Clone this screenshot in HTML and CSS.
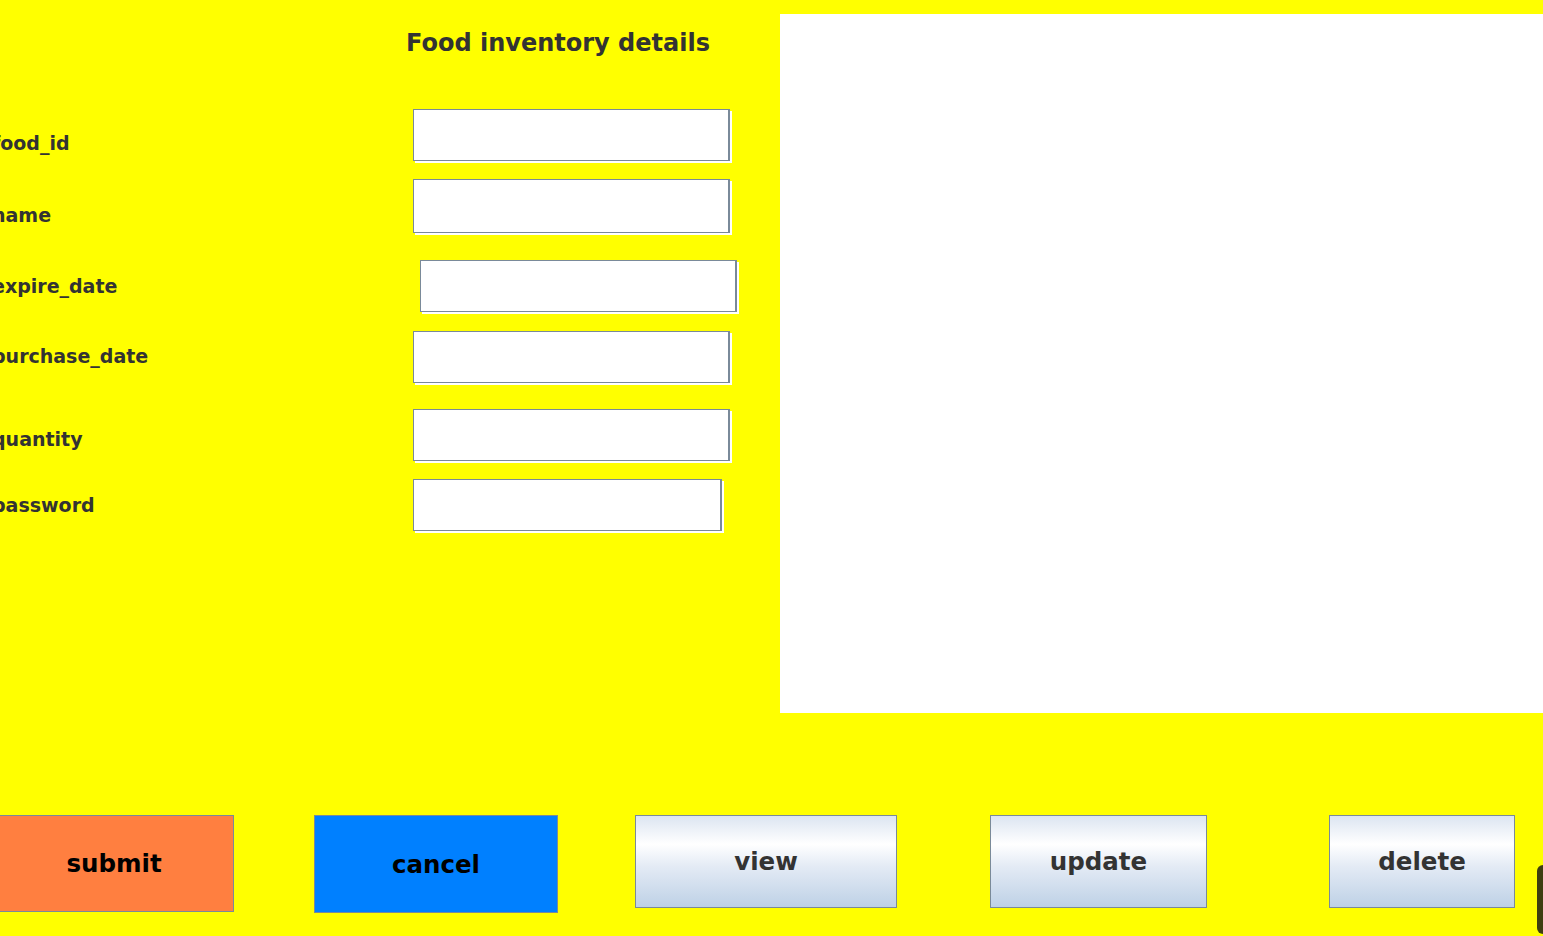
FILE: index.html
```html
<!DOCTYPE html>
<html lang="en">
<head>
<meta charset="utf-8">
<title>Food inventory details</title>
<link rel="stylesheet" href="styles.css">
</head>
<body>
<div class="app">
  <div class="top">
    <section class="form">
      <h1 class="title">Food inventory details</h1>
      <div class="row row-1"><label class="label">food_id</label><input class="field" type="text"></div>
      <div class="row row-2"><label class="label">name</label><input class="field field-tall" type="text"></div>
      <div class="row row-3"><label class="label">expire_date</label><input class="field field-shift" type="text"></div>
      <div class="row row-4"><label class="label">purchase_date</label><input class="field" type="text"></div>
      <div class="row row-5"><label class="label">quantity</label><input class="field" type="text"></div>
      <div class="row row-6"><label class="label">password</label><input class="field field-narrow" type="password"></div>
    </section>
    <div class="panel"></div>
  </div>
  <div class="buttons">
    <button class="btn btn-submit">submit</button>
    <button class="btn btn-cancel">cancel</button>
    <button class="btn btn-metal btn-view">view</button>
    <button class="btn btn-metal btn-update">update</button>
    <button class="btn btn-metal btn-delete">delete</button>
  </div>
  <div class="corner-tip"></div>
</div>
</body>
</html>
```
FILE: styles.css
```css
html, body {
  margin: 0;
  padding: 0;
}
body {
  background: #ffff00;
  width: 1543px;
  height: 936px;
  overflow: hidden;
  font-family: "DejaVu Sans", sans-serif;
  font-weight: bold;
  color: #333333;
}
.app {
  position: relative;
  width: 1543px;
  height: 936px;
}
.top {
  display: flex;
  padding-top: 14px;
}
.form {
  width: 780px;
  flex: none;
  display: flex;
  flex-direction: column;
}
.title {
  margin: 14px 0 0 406px;
  font-size: 24px;
  line-height: 30px;
  font-weight: bold;
  color: #333333;
  white-space: nowrap;
}
.panel {
  flex: 1;
  height: 699px;
  background: #ffffff;
}
.row {
  display: flex;
  align-items: flex-start;
}
.label {
  width: 421px;
  margin-left: -8px;
  flex: none;
  font-size: 19px;
  line-height: 20px;
  white-space: nowrap;
}
.field {
  box-sizing: border-box;
  width: 317px;
  height: 52px;
  margin: 0;
  padding: 0 4px;
  border: 1px solid #7a8a99;
  border-right-width: 2px;
  background: #ffffff;
  box-shadow: 2px 2px 0 #ffffff;
  outline: none;
  font: inherit;
}
.field-tall { height: 54px; }
.field-shift { margin-left: 7px; }
.field-narrow { width: 309px; }

.row-1 { margin-top: 51px; }
.row-1 .label { padding-top: 24px; }
.row-2 { margin-top: 18px; }
.row-2 .label { padding-top: 26px; }
.row-3 { margin-top: 27px; }
.row-3 .label { padding-top: 16px; }
.row-4 { margin-top: 19px; }
.row-4 .label { padding-top: 15px; }
.row-5 { margin-top: 26px; }
.row-5 .label { padding-top: 20px; }
.row-6 { margin-top: 18px; }
.row-6 .label { padding-top: 16px; }

.buttons {
  display: flex;
  align-items: flex-start;
  margin-top: 102px;
}
.btn {
  box-sizing: border-box;
  flex: none;
  margin: 0;
  padding: 0;
  border: 1px solid #7a8a99;
  font-family: inherit;
  font-weight: bold;
  font-size: 24.5px;
  color: #333333;
  cursor: pointer;
}
.btn-submit {
  width: 240px;
  height: 97px;
  margin-left: -6px;
  background: #ff7f40;
  color: #000000;
}
.btn-cancel {
  width: 244px;
  height: 98px;
  margin-left: 80px;
  background: #0080ff;
  color: #000000;
}
.btn-metal {
  height: 93px;
  background: linear-gradient(to bottom, #dce5f1 0%, #ffffff 31%, #e4ebf5 55%, #bed1e6 100%);
}
.btn-view { width: 262px; margin-left: 77px; }
.btn-update { width: 217px; margin-left: 93px; }
.btn-delete { width: 186px; margin-left: 122px; }

.corner-tip {
  position: absolute;
  left: 1537px;
  top: 865px;
  width: 30px;
  height: 69px;
  border-radius: 6px;
  background: rgba(20, 20, 20, 0.82);
}
```
